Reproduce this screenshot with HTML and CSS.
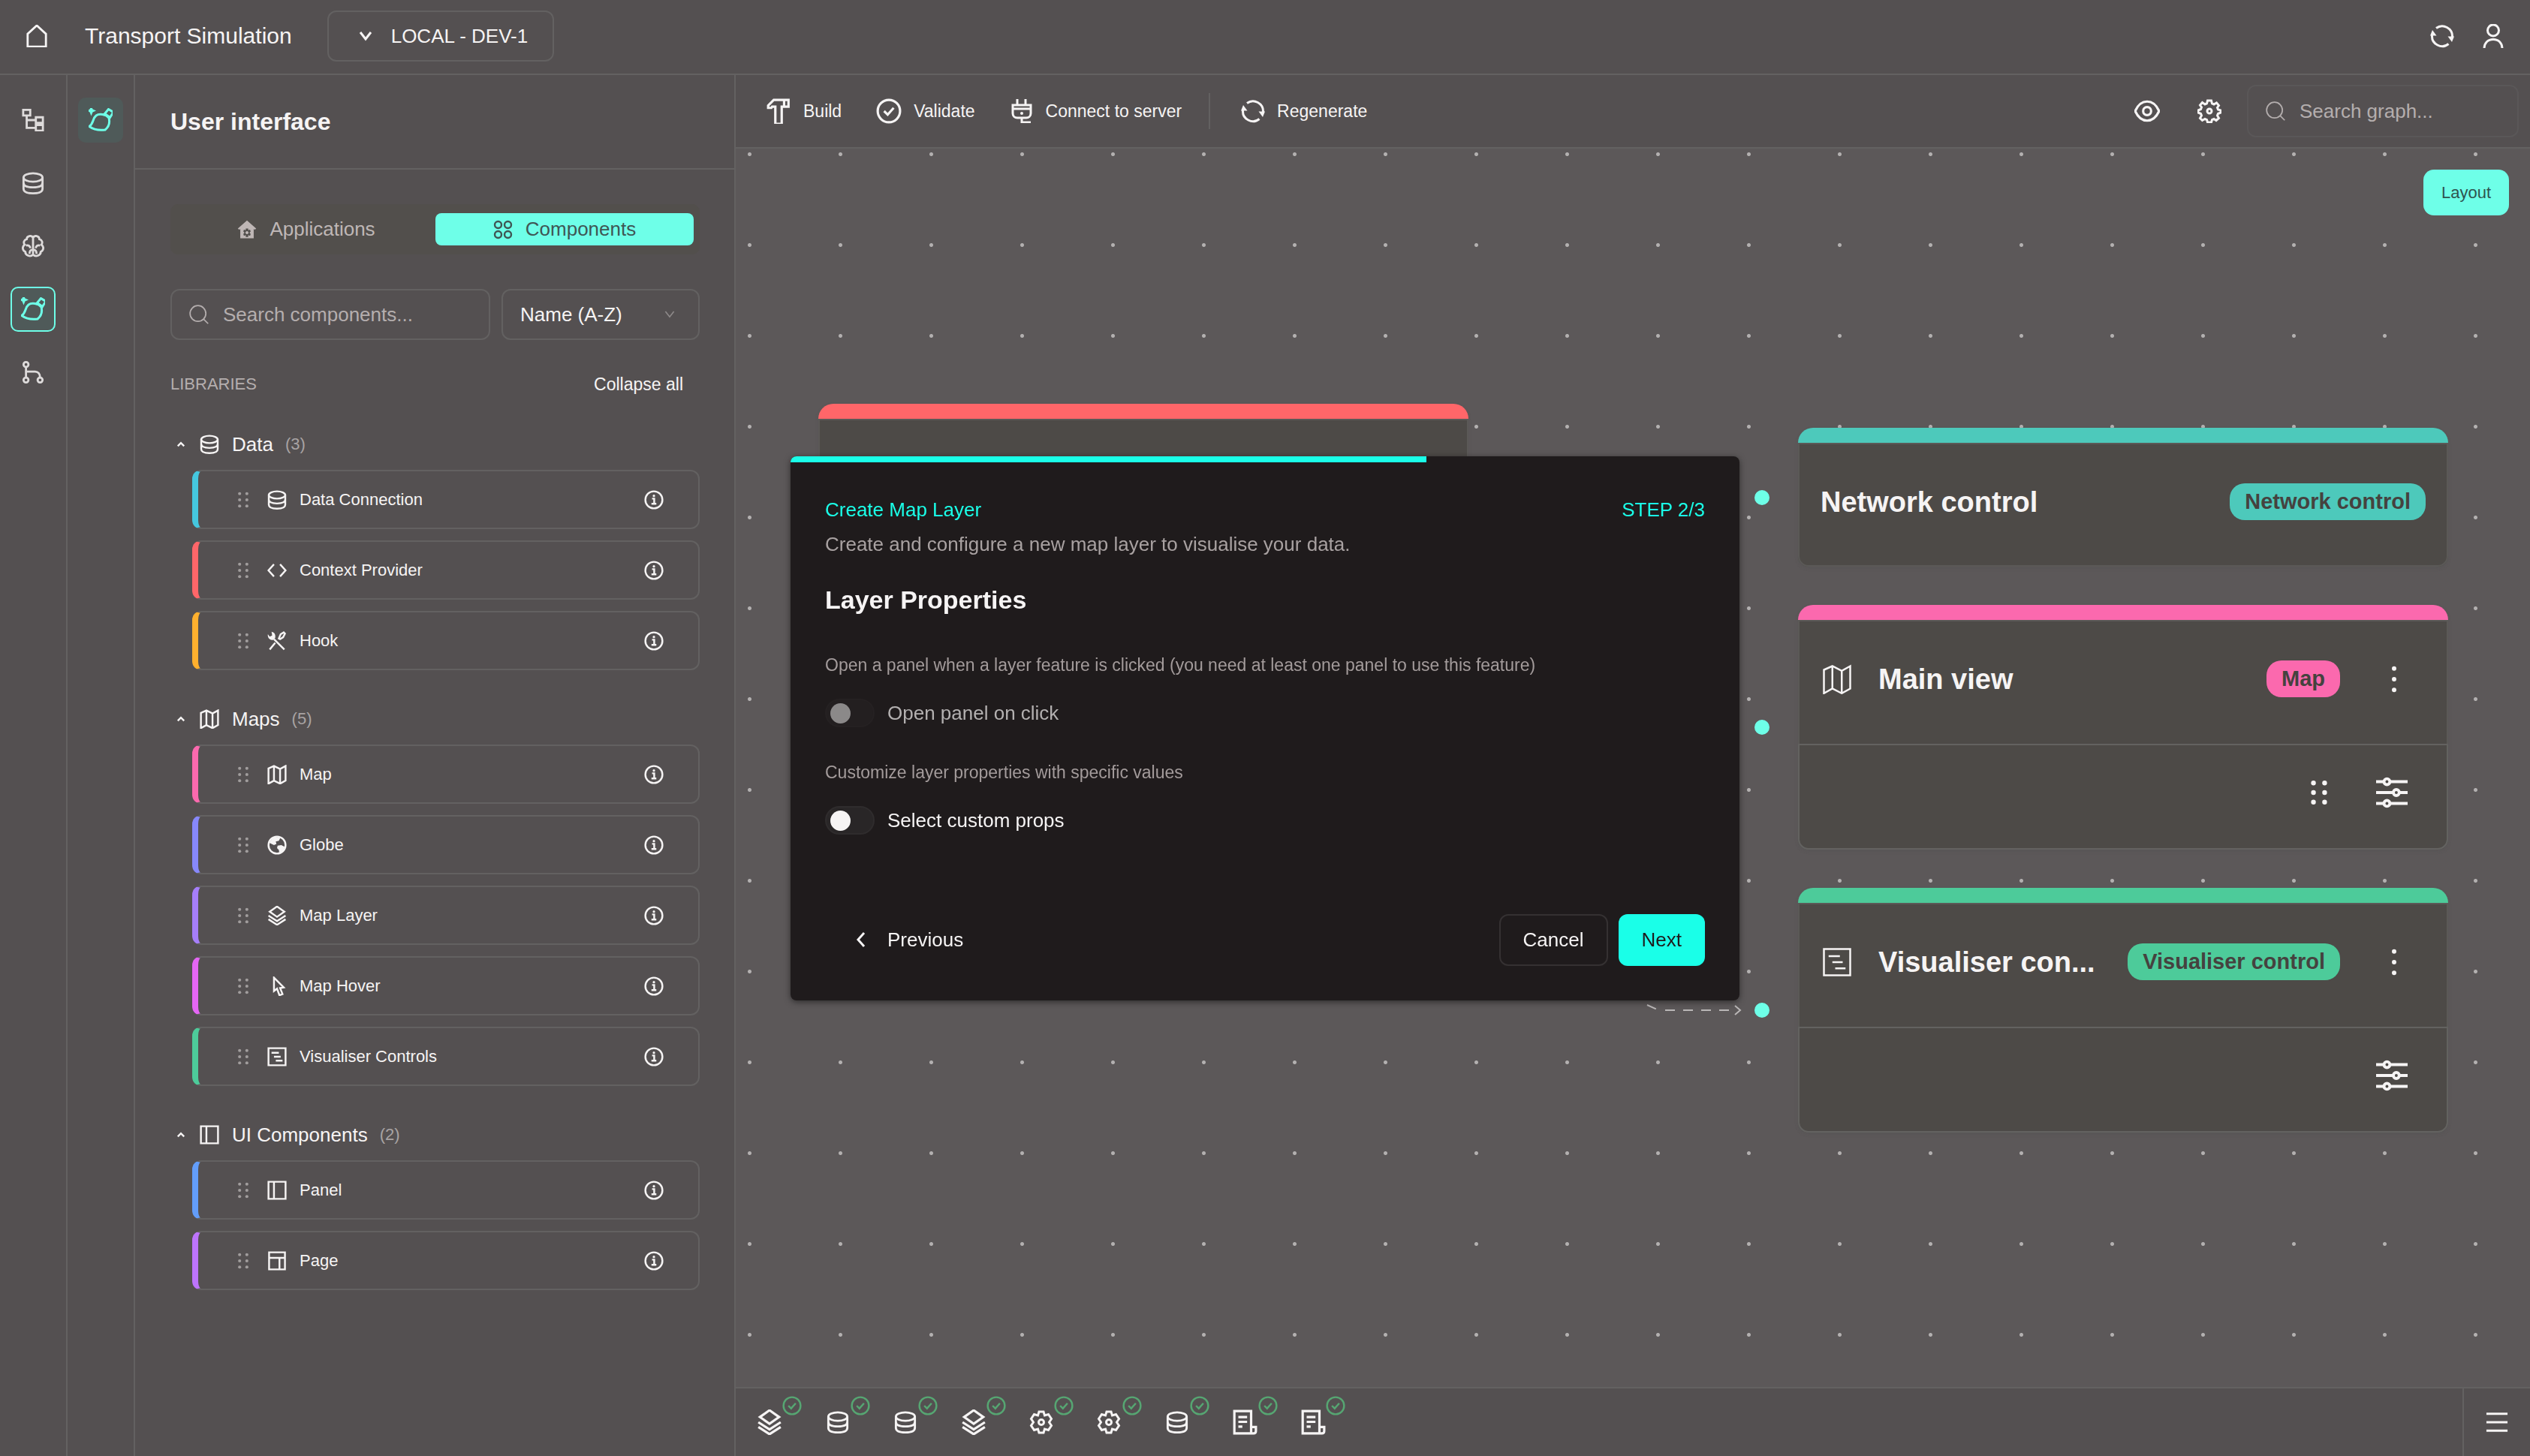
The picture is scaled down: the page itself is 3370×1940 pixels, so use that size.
FILE: index.html
```html
<!DOCTYPE html>
<html lang="en">
<head>
    <meta charset="UTF-8">
    <meta name="viewport" content="width=device-width, initial-scale=1.0">
    <title>Transport Simulation</title>
    <link rel="stylesheet" href="styles.css">
</head>
<body>

    <!-- Icon sprite -->
    <svg class="sprite" aria-hidden="true">
        <symbol id="i-home" viewBox="0 0 32 32"><path d="M3 31V13L16 1l13 12v18z"/></symbol>
        <symbol id="i-down" viewBox="0 0 20 20"><path d="M3 5l7 9 7-9"/></symbol>
        <symbol id="i-up" viewBox="0 0 20 20"><path d="M3 14l7-7 7 7"/></symbol>
        <symbol id="i-left" viewBox="0 0 20 20"><path d="M14 1L6 10l8 9"/></symbol>
        <symbol id="i-refresh" viewBox="0 0 32 32">
            <path d="M8 5.500A13.500 13.500 0 0 1 29.500 17M24.500 26.500A13.500 13.500 0 0 1 2.500 15"/>
            <path class="solid" d="M23.500 16.500h8.500l-3 7.500zM8.500 15.500H0L3 8z"/>
        </symbol>
        <symbol id="i-user" viewBox="0 0 32 32"><circle cx="16" cy="8.500" r="7.500"/><path d="M4 33c0-8 5-12.500 12-12.500S28 25 28 33"/></symbol>
        <symbol id="i-tree" viewBox="0 0 32 32"><path d="M2 1.500h10v8H2zM20 12h10v8H20zM20 23h10v8H20zM7 9.500V27h13M7 16h13"/></symbol>
        <symbol id="i-db" viewBox="0 0 32 32"><ellipse cx="16" cy="8" rx="13.500" ry="6"/><path d="M2.500 8v16c0 4 5 6.500 13.500 6.500S29.500 28 29.500 24V8M2.500 15.500c0 4 5 6.500 13.500 6.500s13.500-2.500 13.500-6.500"/></symbol>
        <symbol id="i-brain" viewBox="0 0 32 32"><path d="M16 4v24M16 4c-2-4-9-3-9 2-4 1-5 5-3 8-4 3-3 8 1 10 0 5 7 8 11 4M16 4c2-4 9-3 9 2 4 1 5 5 3 8 4 3 3 8-1 10 0 5-7 8-11 4M6 15c4-1 6 1 6 4M26 15c-4-1-6 1-6 4M11 27c0-4 1-6 5-6s5 2 5 6"/></symbol>
        <symbol id="i-brush" viewBox="0 0 32 32">
            <path d="M1 24.500C7 20 5 14 10 10c4-3 13-2 17 3 1.500 6 0 12-5 16-8 1-15 0-21-4.500zM26.500 1.500L33 5.500l-4.500 7-7-5z"/>
            <path class="solid" d="M3.500-3.500l2 5 4.500 2-4.500 2-2 5-2-5-4.500-2 4.500-2z"/>
        </symbol>
        <symbol id="i-branch" viewBox="0 0 32 32"><circle cx="6" cy="5" r="3.500"/><circle cx="6" cy="27" r="3.500"/><circle cx="26" cy="27" r="3.500"/><path d="M6 8.500v15M6 15h13c4 0 7 3 7 8.500"/></symbol>
        <symbol id="i-app" viewBox="0 0 32 32"><path class="solid" fill-rule="evenodd" d="M16 1L1 14l2 2 2-1v15h22V15l2 1 2-2zM14 14h4v3l3-1 1 3-2 2 2 2-1 3-3-1v3h-4v-3l-3 1-1-3 2-2-2-2 1-3 3 1zM16 18.500a2.500 2.500 0 1 0 .01 0z"/></symbol>
        <symbol id="i-grid" viewBox="0 0 32 32"><circle cx="8" cy="8" r="5.500"/><circle cx="24" cy="8" r="5.500"/><circle cx="8" cy="24" r="5.500"/><circle cx="24" cy="24" r="5.500"/></symbol>
        <symbol id="i-search" viewBox="0 0 32 32"><circle cx="14.500" cy="14.500" r="12"/><path d="M23 23l7 7"/></symbol>
        <symbol id="i-drag" viewBox="0 0 32 32"><g class="solid"><circle cx="9" cy="4" r="3"/><circle cx="23" cy="4" r="3"/><circle cx="9" cy="16" r="3"/><circle cx="23" cy="16" r="3"/><circle cx="9" cy="28" r="3"/><circle cx="23" cy="28" r="3"/></g></symbol>
        <symbol id="i-info" viewBox="0 0 32 32"><circle cx="16" cy="16" r="14"/><path d="M13 14h3.500v8M12 22.500h8"/><circle class="solid" cx="16" cy="9.500" r="2"/></symbol>
        <symbol id="i-code" viewBox="0 0 32 32"><path d="M11 6L2 16l9 10M21 6l9 10-9 10"/></symbol>
        <symbol id="i-tools" viewBox="0 0 32 32"><path d="M4 30l9-11M19 12l3-7 5-3 2 2-3 6-5 3zM11 13l17 17"/><path class="solid" d="M7 1l1 6-4 2-3-4c-1 6 4 11 9 9l3-3c1-5-1-9-6-10z"/></symbol>
        <symbol id="i-map" viewBox="0 0 32 32"><path d="M2 6l9-4 10 5 9-5v24l-9 5-10-5-9 5zM11 2v24M21 7v24"/></symbol>
        <symbol id="i-globe" viewBox="0 0 32 32"><circle cx="16" cy="16" r="14"/><path class="solid" d="M10 3h12l-3 6-5 1 1 4-4 2-8-4zM17 17l6-1 6 3-4 8-5 3-1-6-3-3z"/></symbol>
        <symbol id="i-layers" viewBox="0 0 32 32"><path d="M16 1l12 8.500L16 18 4 9.500zM2 16l14 9 14-9M2 22l14 9 14-9"/></symbol>
        <symbol id="i-cursor" viewBox="0 0 32 32"><path d="M11 2v22l5-4 4 11 5-2-4-10 6-1z"/></symbol>
        <symbol id="i-visual" viewBox="0 0 32 32"><path d="M2 2h28v28H2zM7 9.500h12M11 16h11M14 22.500h11"/></symbol>
        <symbol id="i-panel" viewBox="0 0 32 32"><path d="M2 2h28v28H2zM11 2v28"/></symbol>
        <symbol id="i-page" viewBox="0 0 32 32"><path d="M3 2h26v28H3zM3 11h26M20 11v19"/></symbol>
        <symbol id="i-hammer" viewBox="0 0 32 32"><path d="M3 9l7-7h18.500v8.500h-8.500V32h-8V10.500H8L7 12H3z"/><path d="M23 2v8"/></symbol>
        <symbol id="i-check" viewBox="0 0 32 32"><circle cx="16" cy="16" r="14"/><path d="M10 16l4.500 4.500L22 12"/></symbol>
        <symbol id="i-plug" viewBox="0 0 32 32"><path d="M10 0v8M21 0v8M4 8h24v5H4zM4 13v6c0 4 3 6 6 6h12c3 0 6-2 6-6v-6M16 25v6h12"/><circle class="solid" cx="16" cy="19" r="2"/></symbol>
        <symbol id="i-eye" viewBox="0 0 32 32"><path d="M1 16C5 7 10 4 16 4s11 3 15 12c-4 9-9 12-15 12S5 25 1 16z"/><circle cx="16" cy="16" r="5"/></symbol>
        <symbol id="i-cog" viewBox="0 0 32 32"><path d="M13.500 2h5l1 4 2.500 1 3.500-2 3 3.500-2 3 1 2.500 3.500 1v3l-3.500 1.500-1 2.500 2 3.500-3.500 3-3-2-2.500 1-1 3.500h-5l-1-3.500-2.500-1-3.500 2-3-3 2-3.500-1-2.500L1 18v-3l3.500-1.500 1-2.500-2-3 3-3.500L10 7l2.500-1z"/><circle cx="16" cy="16" r="3"/></symbol>
        <symbol id="i-gear" viewBox="0 0 32 32"><path d="M13 2h6l1.500 5 5-1.500 4 6-3 4.500 3 4.500-4 6-5-1.500L19 30h-6l-1.500-5-5 1.500-4-6 3-4.500-3-4.500 4-6 5 1.500z"/><circle cx="16" cy="16" r="3.500"/></symbol>
        <symbol id="i-kebab" viewBox="0 0 32 32"><g class="solid"><circle cx="16" cy="4" r="2.500"/><circle cx="16" cy="16" r="2.500"/><circle cx="16" cy="28" r="2.500"/></g></symbol>
        <symbol id="i-sliders" viewBox="0 0 32 32"><path d="M0 5h8M14 5h18M0 16h17M24 16h8M0 27h8M14 27h18"/><circle cx="11" cy="5" r="3"/><circle cx="20.500" cy="16" r="3"/><circle cx="11" cy="27" r="3"/></symbol>
        <symbol id="i-script" viewBox="0 0 32 32"><path d="M24 22V2H3v28h24c2 0 3-1 3-3v-5h-6v8M8 9.500h11M8 15.500h11M8 21.500h5"/></symbol>
        <symbol id="i-menu" viewBox="0 0 32 32"><path d="M1 4h30M1 16h30M1 28h30"/></symbol>
    </svg>

    <!-- Top header -->
    <header class="top-bar">
        <button class="icon-btn" aria-label="Home"><svg class="icon icon-30"><use href="#i-home"/></svg></button>
        <h1 class="app-title">Transport Simulation</h1>
        <div class="select-box env-select">
            <select aria-label="Environment"><option>LOCAL - DEV-1</option></select>
            <svg class="icon icon-20"><use href="#i-down"/></svg>
        </div>
        <div class="top-actions">
            <button class="icon-btn" aria-label="Refresh"><svg class="icon icon-32"><use href="#i-refresh"/></svg></button>
            <button class="icon-btn" aria-label="Account"><svg class="icon icon-32"><use href="#i-user"/></svg></button>
        </div>
    </header>

    <div class="workspace">
        <!-- Main navigation -->
        <nav class="rail">
            <button class="rail-btn" aria-label="Structure"><svg class="icon icon-30"><use href="#i-tree"/></svg></button>
            <button class="rail-btn" aria-label="Data"><svg class="icon icon-30"><use href="#i-db"/></svg></button>
            <button class="rail-btn" aria-label="Intelligence"><svg class="icon icon-30"><use href="#i-brain"/></svg></button>
            <button class="rail-btn current" aria-label="User interface"><svg class="icon icon-32"><use href="#i-brush"/></svg></button>
            <button class="rail-btn" aria-label="Branches"><svg class="icon icon-30"><use href="#i-branch"/></svg></button>
        </nav>
        <nav class="rail">
            <button class="rail-btn tinted" aria-label="Components"><svg class="icon icon-32"><use href="#i-brush"/></svg></button>
        </nav>

        <!-- Component library -->
        <aside class="library">
            <h2 class="library-title">User interface</h2>
            <div class="library-body">
                <div class="tabs" role="tablist">
                    <button class="tab" role="tab"><svg class="icon icon-26"><use href="#i-app"/></svg>Applications</button>
                    <button class="tab active-tab" role="tab"><svg class="icon icon-26"><use href="#i-grid"/></svg>Components</button>
                </div>

                <div class="filters">
                    <div class="search-box">
                        <svg class="icon icon-28"><use href="#i-search"/></svg>
                        <input type="text" aria-label="Search components" placeholder="Search components...">
                    </div>
                    <div class="select-box sort-select">
                        <select aria-label="Sort by"><option>Name (A-Z)</option></select>
                        <svg class="icon icon-16"><use href="#i-down"/></svg>
                    </div>
                </div>

                <div class="libraries-head">
                    <span>LIBRARIES</span>
                    <button class="link-btn">Collapse all</button>
                </div>

                <section class="group">
                    <button class="group-head"><svg class="icon icon-12"><use href="#i-up"/></svg><svg class="icon icon-26"><use href="#i-db"/></svg>Data <span class="count">(3)</span></button>
                    <ul class="items">
                        <li class="item cyan"><svg class="icon icon-22 grip"><use href="#i-drag"/></svg><svg class="icon icon-26"><use href="#i-db"/></svg><span>Data Connection</span><button class="icon-btn" aria-label="About Data Connection"><svg class="icon icon-26"><use href="#i-info"/></svg></button></li>
                        <li class="item red"><svg class="icon icon-22 grip"><use href="#i-drag"/></svg><svg class="icon icon-26"><use href="#i-code"/></svg><span>Context Provider</span><button class="icon-btn" aria-label="About Context Provider"><svg class="icon icon-26"><use href="#i-info"/></svg></button></li>
                        <li class="item amber"><svg class="icon icon-22 grip"><use href="#i-drag"/></svg><svg class="icon icon-26"><use href="#i-tools"/></svg><span>Hook</span><button class="icon-btn" aria-label="About Hook"><svg class="icon icon-26"><use href="#i-info"/></svg></button></li>
                    </ul>
                </section>

                <section class="group">
                    <button class="group-head"><svg class="icon icon-12"><use href="#i-up"/></svg><svg class="icon icon-26"><use href="#i-map"/></svg>Maps <span class="count">(5)</span></button>
                    <ul class="items">
                        <li class="item pink"><svg class="icon icon-22 grip"><use href="#i-drag"/></svg><svg class="icon icon-26"><use href="#i-map"/></svg><span>Map</span><button class="icon-btn" aria-label="About Map"><svg class="icon icon-26"><use href="#i-info"/></svg></button></li>
                        <li class="item indigo"><svg class="icon icon-22 grip"><use href="#i-drag"/></svg><svg class="icon icon-26"><use href="#i-globe"/></svg><span>Globe</span><button class="icon-btn" aria-label="About Globe"><svg class="icon icon-26"><use href="#i-info"/></svg></button></li>
                        <li class="item violet"><svg class="icon icon-22 grip"><use href="#i-drag"/></svg><svg class="icon icon-26"><use href="#i-layers"/></svg><span>Map Layer</span><button class="icon-btn" aria-label="About Map Layer"><svg class="icon icon-26"><use href="#i-info"/></svg></button></li>
                        <li class="item magenta"><svg class="icon icon-22 grip"><use href="#i-drag"/></svg><svg class="icon icon-26"><use href="#i-cursor"/></svg><span>Map Hover</span><button class="icon-btn" aria-label="About Map Hover"><svg class="icon icon-26"><use href="#i-info"/></svg></button></li>
                        <li class="item green"><svg class="icon icon-22 grip"><use href="#i-drag"/></svg><svg class="icon icon-26"><use href="#i-visual"/></svg><span>Visualiser Controls</span><button class="icon-btn" aria-label="About Visualiser Controls"><svg class="icon icon-26"><use href="#i-info"/></svg></button></li>
                    </ul>
                </section>

                <section class="group">
                    <button class="group-head"><svg class="icon icon-12"><use href="#i-up"/></svg><svg class="icon icon-26"><use href="#i-panel"/></svg>UI Components <span class="count">(2)</span></button>
                    <ul class="items">
                        <li class="item blue"><svg class="icon icon-22 grip"><use href="#i-drag"/></svg><svg class="icon icon-26"><use href="#i-panel"/></svg><span>Panel</span><button class="icon-btn" aria-label="About Panel"><svg class="icon icon-26"><use href="#i-info"/></svg></button></li>
                        <li class="item purple"><svg class="icon icon-22 grip"><use href="#i-drag"/></svg><svg class="icon icon-26"><use href="#i-page"/></svg><span>Page</span><button class="icon-btn" aria-label="About Page"><svg class="icon icon-26"><use href="#i-info"/></svg></button></li>
                    </ul>
                </section>
            </div>
        </aside>

        <!-- Graph editor -->
        <main class="editor">
            <div class="toolbar">
                <button class="tool"><svg class="icon icon-34"><use href="#i-hammer"/></svg>Build</button>
                <button class="tool"><svg class="icon icon-34"><use href="#i-check"/></svg>Validate</button>
                <button class="tool"><svg class="icon icon-32"><use href="#i-plug"/></svg>Connect to server</button>
                <span class="divider"></span>
                <button class="tool"><svg class="icon icon-32"><use href="#i-refresh"/></svg>Regenerate</button>
                <div class="toolbar-end">
                    <button class="icon-btn" aria-label="Visibility"><svg class="icon icon-34"><use href="#i-eye"/></svg></button>
                    <button class="icon-btn" aria-label="Settings"><svg class="icon icon-32"><use href="#i-cog"/></svg></button>
                    <div class="search-box graph-search">
                        <svg class="icon icon-28"><use href="#i-search"/></svg>
                        <input type="text" aria-label="Search graph" placeholder="Search graph...">
                    </div>
                </div>
            </div>

            <div class="canvas">
                <button class="layout-btn">Layout</button>

                <svg class="edge" viewBox="0 0 130 30" aria-hidden="true">
                    <path d="M4 10l13 6M28 17H124" stroke-dasharray="13 11"/>
                    <path d="M121 11l7 6-7 6"/>
                </svg>

                <article class="node red node-context"><div class="node-head"></div></article>

                <article class="node teal node-network">
                    <span class="handle"></span>
                    <div class="node-head">
                        <h3>Network control</h3>
                        <span class="badge">Network control</span>
                    </div>
                </article>

                <article class="node pink node-main">
                    <span class="handle"></span>
                    <div class="node-head">
                        <svg class="icon icon-40"><use href="#i-map"/></svg>
                        <h3>Main view</h3>
                        <span class="badge">Map</span>
                        <button class="icon-btn kebab" aria-label="More"><svg class="icon icon-38"><use href="#i-kebab"/></svg></button>
                    </div>
                    <div class="node-row">
                        <svg class="icon icon-34"><use href="#i-drag"/></svg>
                        <button class="icon-btn" aria-label="Configure"><svg class="icon icon-42"><use href="#i-sliders"/></svg></button>
                    </div>
                </article>

                <article class="node green node-visual">
                    <span class="handle"></span>
                    <div class="node-head">
                        <svg class="icon icon-40"><use href="#i-visual"/></svg>
                        <h3 title="Visualiser control">Visualiser con...</h3>
                        <span class="badge">Visualiser control</span>
                        <button class="icon-btn kebab" aria-label="More"><svg class="icon icon-38"><use href="#i-kebab"/></svg></button>
                    </div>
                    <div class="node-row">
                        <button class="icon-btn" aria-label="Configure"><svg class="icon icon-42"><use href="#i-sliders"/></svg></button>
                    </div>
                </article>
            </div>

            <footer class="status-bar">
                <div class="jobs">
                    <button class="job" aria-label="Layers ready"><svg class="icon icon-34"><use href="#i-layers"/></svg><svg class="icon icon-26 ok"><use href="#i-check"/></svg></button>
                    <button class="job" aria-label="Database ready"><svg class="icon icon-30"><use href="#i-db"/></svg><svg class="icon icon-26 ok"><use href="#i-check"/></svg></button>
                    <button class="job" aria-label="Database ready"><svg class="icon icon-30"><use href="#i-db"/></svg><svg class="icon icon-26 ok"><use href="#i-check"/></svg></button>
                    <button class="job" aria-label="Layers ready"><svg class="icon icon-34"><use href="#i-layers"/></svg><svg class="icon icon-26 ok"><use href="#i-check"/></svg></button>
                    <button class="job" aria-label="Service ready"><svg class="icon icon-32"><use href="#i-gear"/></svg><svg class="icon icon-26 ok"><use href="#i-check"/></svg></button>
                    <button class="job" aria-label="Service ready"><svg class="icon icon-32"><use href="#i-gear"/></svg><svg class="icon icon-26 ok"><use href="#i-check"/></svg></button>
                    <button class="job" aria-label="Database ready"><svg class="icon icon-30"><use href="#i-db"/></svg><svg class="icon icon-26 ok"><use href="#i-check"/></svg></button>
                    <button class="job" aria-label="Script ready"><svg class="icon icon-34"><use href="#i-script"/></svg><svg class="icon icon-26 ok"><use href="#i-check"/></svg></button>
                    <button class="job" aria-label="Script ready"><svg class="icon icon-34"><use href="#i-script"/></svg><svg class="icon icon-26 ok"><use href="#i-check"/></svg></button>
                </div>
                <button class="menu-btn" aria-label="Menu"><svg class="icon icon-30"><use href="#i-menu"/></svg></button>
            </footer>
        </main>
    </div>

    <!-- Create Map Layer dialog -->
    <div class="overlay">
        <div class="modal" role="dialog" aria-labelledby="modal-title">
            <div class="progress"><div class="progress-fill"></div></div>
            <form class="modal-body" onsubmit="event.preventDefault();">
                <div class="modal-top">
                    <h2 id="modal-title">Create Map Layer</h2>
                    <span>STEP 2/3</span>
                </div>
                <p class="modal-desc">Create and configure a new map layer to visualise your data.</p>
                <h3 class="modal-heading">Layer Properties</h3>

                <p class="hint">Open a panel when a layer feature is clicked (you need at least one panel to use this feature)</p>
                <label class="switch disabled"><input type="checkbox" disabled>Open panel on click</label>

                <p class="hint second">Customize layer properties with specific values</p>
                <label class="switch"><input type="checkbox">Select custom props</label>

                <div class="modal-actions">
                    <button type="button" class="btn btn-back"><svg class="icon icon-20"><use href="#i-left"/></svg>Previous</button>
                    <button type="button" class="btn btn-cancel">Cancel</button>
                    <button type="submit" class="btn btn-next">Next</button>
                </div>
            </form>
        </div>
    </div>

</body>
</html>
```
FILE: styles.css
```css
* {
    box-sizing: border-box;
}

body {
    --panel: #545051;
    --canvas: #5c5859;
    --node: #4d4a47;
    --line: #636161;
    --text: #f6f4f4;
    --muted: #b4aeae;
    --accent: #6effe8;
    display: flex;
    flex-direction: column;
    height: 100vh;
    margin: 0;
    font-family: "Liberation Sans", Arial, sans-serif;
    font-size: 26px;
    color: var(--text);
    background-color: var(--panel);
}

h1, h2, h3, p, ul {
    margin: 0;
    padding: 0;
}

button, input, select {
    font: inherit;
    color: inherit;
    background: none;
    border: none;
    padding: 0;
    margin: 0;
}

button {
    cursor: pointer;
}

/* Icons */
.sprite {
    display: none;
}

.icon {
    flex: none;
    display: block;
    fill: none;
    stroke: currentColor;
    stroke-width: 3;
    overflow: visible;
}

.solid {
    fill: currentColor;
    stroke: none;
}

.icon-12 { width: 12px; height: 12px; stroke-width: 4; }
.icon-16 { width: 16px; height: 16px; stroke-width: 2; }
.icon-20 { width: 20px; height: 20px; }
.icon-22 { width: 22px; height: 22px; }
.icon-26 { width: 26px; height: 26px; }
.icon-28 { width: 28px; height: 28px; }
.icon-30 { width: 30px; height: 30px; }
.icon-32 { width: 32px; height: 32px; }
.icon-34 { width: 34px; height: 34px; }
.icon-38 { width: 38px; height: 38px; }
.icon-40 { width: 40px; height: 40px; }
.icon-42 { width: 42px; height: 42px; }

.icon-btn {
    display: flex;
}

/* Top header */
.top-bar {
    display: flex;
    align-items: center;
    height: 100px;
    flex: none;
    padding: 0 33px 2px 34px;
    border-bottom: 2px solid var(--line);
}

.app-title {
    margin-left: 49px;
    font-size: 30px;
    font-weight: normal;
}

.select-box {
    display: grid;
    align-items: center;
    height: 68px;
    border: 2px solid var(--line);
    border-radius: 12px;
}

.select-box select,
.select-box .icon {
    grid-area: 1 / 1;
}

.select-box select {
    appearance: none;
    width: 100%;
    height: 100%;
}

.select-box .icon {
    pointer-events: none;
}

.env-select {
    width: 302px;
    margin-left: 47px;
}

.env-select select {
    padding-left: 83px;
}

.env-select .icon {
    margin-left: 39px;
}

.top-actions {
    display: flex;
    gap: 36px;
    margin-left: auto;
}

/* Navigation rails */
.workspace {
    display: flex;
    flex: 1;
    min-height: 0;
}

.rail {
    display: flex;
    flex-direction: column;
    align-items: center;
    gap: 24px;
    width: 90px;
    flex: none;
    padding-top: 30px;
    border-right: 2px solid var(--line);
}

.rail-btn {
    display: grid;
    place-items: center;
    width: 60px;
    height: 60px;
    border-radius: 10px;
    color: #dedbdb;
}

.rail-btn.tinted,
.rail-btn.current {
    background-color: #4f5a59;
    color: var(--accent);
}

.rail-btn.current {
    border: 2px solid var(--accent);
}

/* Component library */
.library {
    width: 800px;
    flex: none;
    border-right: 2px solid var(--line);
}

.library-title {
    height: 126px;
    padding-left: 47px;
    border-bottom: 2px solid var(--line);
    font-size: 32px;
    line-height: 124px;
}

.library-body {
    padding: 46px 46px 0 47px;
}

.tabs {
    display: flex;
    padding: 12px 8px 12px 9px;
    border-radius: 10px;
    background-color: #524f4c;
}

.tab {
    display: flex;
    flex: 1;
    align-items: center;
    justify-content: center;
    gap: 17px;
    height: 43px;
    border-radius: 8px;
    color: #bfb7b6;
}

.tab.active-tab {
    background-color: var(--accent);
    color: #3f5654;
}

.filters {
    display: flex;
    gap: 15px;
    margin-top: 46px;
}

.search-box {
    display: flex;
    flex: 1;
    align-items: center;
    gap: 18px;
    min-width: 0;
    height: 68px;
    padding: 0 22px;
    border: 2px solid var(--line);
    border-radius: 12px;
    color: var(--muted);
}

.search-box .icon {
    stroke-width: 2;
}

.search-box input {
    flex: 1;
    min-width: 0;
    height: 100%;
    outline: none;
}

.search-box input::placeholder {
    color: var(--muted);
}

.sort-select {
    width: 264px;
}

.sort-select select {
    padding-left: 23px;
}

.sort-select .icon {
    justify-self: end;
    margin-right: 30px;
    color: #8e8a8a;
}

.libraries-head {
    display: flex;
    justify-content: space-between;
    margin-top: 44px;
    padding-right: 22px;
    font-size: 22px;
    line-height: 30px;
    color: var(--muted);
}

.link-btn {
    font-size: 23px;
    color: var(--text);
}

.group {
    margin-top: 41px;
}

.group-head {
    display: flex;
    align-items: center;
    height: 48px;
    padding-left: 8px;
}

.group-head .icon-26 {
    margin: 0 17px 0 19px;
}

.count {
    margin-left: 16px;
    font-size: 22px;
    color: #a8a3a3;
}

.items {
    display: flex;
    flex-direction: column;
    gap: 15px;
    margin: 10px 0 0 29px;
    list-style: none;
}

.item {
    display: flex;
    align-items: center;
    height: 79px;
    padding: 0 46px 0 49px;
    border: 2px solid var(--line);
    border-left: 8px solid var(--tone);
    border-radius: 12px;
    font-size: 22px;
}

.item .grip {
    margin-right: 21px;
    color: #a19d9d;
}

.item span {
    flex: 1;
    margin-left: 17px;
}

.cyan { --tone: #45c7de; }
.red { --tone: #ff6669; }
.amber { --tone: #ffb02e; }
.pink { --tone: #fb69ae; }
.indigo { --tone: #8788fb; }
.violet { --tone: #a67efa; }
.magenta { --tone: #e566f5; }
.green { --tone: #4dcb9a; }
.blue { --tone: #639df9; }
.purple { --tone: #bd74fc; }
.teal { --tone: #4dc9bb; }

/* Editor toolbar */
.editor {
    display: flex;
    flex-direction: column;
    flex: 1;
    min-width: 0;
}

.toolbar {
    display: flex;
    align-items: center;
    height: 98px;
    flex: none;
    padding: 0 15px 0 40px;
    border-bottom: 2px solid var(--line);
}

.tool {
    display: flex;
    align-items: center;
    gap: 16px;
    margin-right: 46px;
    font-size: 23px;
}

.divider {
    width: 2px;
    height: 48px;
    margin: 0 41px 0 -10px;
    background-color: var(--line);
}

.toolbar-end {
    display: flex;
    align-items: center;
    gap: 50px;
    margin-left: auto;
}

.graph-search {
    flex: none;
    width: 362px;
    height: 70px;
    margin-left: -16px;
    border-color: #5a5758;
}

/* Canvas */
.canvas {
    position: relative;
    flex: 1;
    background-color: var(--canvas);
    background-image: radial-gradient(circle, #b3b0b0 2px, transparent 3px);
    background-size: 121px 121px;
    background-position: -42px -53px;
    overflow: hidden;
}

.layout-btn {
    position: absolute;
    top: 28px;
    right: 28px;
    height: 61px;
    padding: 0 24px;
    border-radius: 14px;
    background-color: var(--accent);
    color: #2f5450;
    font-size: 22px;
}

.edge {
    position: absolute;
    left: 1210px;
    top: 1131px;
    width: 130px;
    height: 30px;
    fill: none;
    stroke: #bab7b7;
    stroke-width: 2;
}

.node {
    position: absolute;
    width: 866px;
    border-top: 20px solid var(--tone);
    border-radius: 20px 20px 14px 14px;
    background-color: var(--node);
    box-shadow: inset 0 0 0 2px #5b5957, 0 2px 4px rgba(80, 80, 80, 0.3);
}

.node-context { left: 110px; top: 340px; }
.node-network { left: 1415px; top: 372px; }
.node-main { left: 1415px; top: 608px; }
.node-visual { left: 1415px; top: 985px; }

.node-head {
    display: flex;
    align-items: center;
    height: 165px;
    padding: 0 30px 8px;
}

.node-head h3 {
    flex: 1;
    min-width: 0;
    margin-right: 20px;
    font-size: 38px;
    line-height: 48px;
    white-space: nowrap;
}

.node-head .icon-40 {
    margin: 0 35px 0 2px;
    stroke-width: 2;
}

.badge {
    padding: 0 20px;
    border-radius: 20px;
    background-color: var(--tone);
    color: #45423f;
    font-size: 29px;
    font-weight: bold;
    line-height: 49px;
}

.kebab {
    margin: 0 23px 0 53px;
}

.node-row {
    display: flex;
    align-items: center;
    justify-content: flex-end;
    gap: 59px;
    height: 141px;
    padding: 0 52px 12px 0;
    border: 2px solid #636260;
    border-radius: 0 0 14px 14px;
}

.handle {
    position: absolute;
    left: -58px;
    top: calc(50% - 20px);
    width: 20px;
    height: 20px;
    border-radius: 50%;
    background-color: var(--accent);
}

/* Status bar */
.status-bar {
    display: flex;
    justify-content: space-between;
    height: 92px;
    flex: none;
    border-top: 2px solid var(--line);
}

.jobs {
    display: grid;
    grid-template-columns: repeat(9, 1fr);
    width: 814px;
}

.job {
    position: relative;
    display: grid;
    place-items: center;
}

.job .ok {
    position: absolute;
    top: 10px;
    right: 2px;
    color: #56a672;
}

.menu-btn {
    display: grid;
    place-items: center;
    width: 90px;
    border-left: 2px solid var(--line);
}

/* Dialog */
.overlay {
    position: fixed;
    inset: 0;
    display: flex;
    align-items: center;
    justify-content: center;
}

.modal {
    width: 1264px;
    max-width: 90%;
    border-radius: 8px;
    background-color: #1f1b1c;
    box-shadow: 0 2px 8px rgba(0, 0, 0, 0.5);
    overflow: hidden;
}

.progress {
    height: 8px;
}

.progress-fill {
    width: 67%;
    height: 100%;
    background-color: #1affe8;
}

.modal-body {
    padding: 48px 46px 46px;
    line-height: 30px;
}

.modal-top {
    display: flex;
    justify-content: space-between;
    color: #1affe8;
}

.modal-top h2 {
    font-size: 26px;
    font-weight: normal;
}

.modal-desc {
    margin-top: 16px;
    color: #a8a1a1;
}

.modal-heading {
    margin-top: 39px;
    font-size: 34px;
    line-height: 40px;
}

.hint {
    margin-top: 53px;
    font-size: 23px;
    line-height: 28px;
    color: #a39b9b;
}

.hint.second {
    margin-top: 46px;
}

.switch {
    display: flex;
    align-items: center;
    gap: 17px;
    margin-top: 31px;
}

.switch input {
    appearance: none;
    width: 66px;
    height: 38px;
    padding: 4px 5px;
    border: 2px solid #2f2c2d;
    border-radius: 19px;
    background-color: #292627;
}

.switch input::before {
    content: "";
    display: block;
    width: 27px;
    height: 27px;
    border-radius: 50%;
    background-color: #f6f4f4;
}

.switch.disabled {
    color: #b3b0b0;
}

.switch.disabled input {
    border-color: #252122;
    background-color: #231f20;
}

.switch.disabled input::before {
    background-color: #8b8989;
}

.modal-actions {
    display: flex;
    gap: 14px;
    margin-top: 106px;
}

.btn {
    height: 69px;
    border-radius: 12px;
}

.btn-back {
    display: flex;
    align-items: center;
    gap: 25px;
    margin: 0 auto 0 38px;
}

.btn-cancel {
    padding: 0 30px;
    border: 2px solid #353132;
}

.btn-next {
    padding: 0 31px;
    background-color: #1affe8;
    color: #1f1b1c;
}
```
